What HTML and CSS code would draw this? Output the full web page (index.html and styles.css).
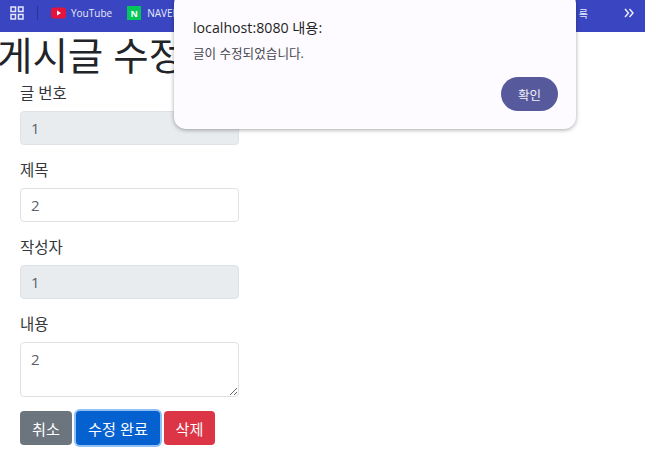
FILE: index.html
```html
<!DOCTYPE html>
<html lang="ko">
<head>
<meta charset="utf-8">
<title>게시글 수정</title>
<link rel="stylesheet" href="styles.css">
</head>
<body>
<header class="toolbar">
  <svg class="apps" width="14" height="14" viewBox="0 0 14 14"><g fill="none" stroke="#e4e6fa" stroke-width="1.5"><rect x="1" y="1" width="4.5" height="4.5"/><rect x="8.5" y="1" width="4.5" height="4.5"/><rect x="1" y="8.5" width="4.5" height="4.5"/><rect x="8.5" y="8.5" width="4.5" height="4.5"/></g></svg>
  <span class="sep"></span>
  <svg class="bm-icon" width="15" height="12" viewBox="0 0 15 12"><rect width="15" height="11" y="0.5" rx="3" fill="#e6143c"/><path d="M6 3.5v5l4-2.500z" fill="#fff"/></svg>
  <span class="bm-label">YouTube</span>
  <span class="naver">N</span>
  <span class="bm-label">NAVER</span>
  <span class="bm-end">록</span>
  <svg class="more" width="10" height="10" viewBox="0 0 10 10"><path d="M1 1l3.500 4L1 9M5.500 1L9 5l-3.500 4" fill="none" stroke="#f0f1ff" stroke-width="1.400"/></svg>
</header>
<main class="page">
  <h1 class="title">게시글 수정</h1>
  <form class="form">
    <div class="field"><label class="label">글 번호</label><input class="control" value="1" readonly></div>
    <div class="field"><label class="label">제목</label><input class="control editable" value="2"></div>
    <div class="field"><label class="label">작성자</label><input class="control" value="1" readonly></div>
    <div class="field field-last"><label class="label">내용</label><textarea class="control editable area">2</textarea></div>
    <div class="actions">
      <button type="button" class="btn grey">취소</button>
      <button type="button" class="btn blue">수정 완료</button>
      <button type="button" class="btn red">삭제</button>
    </div>
  </form>
</main>
<div class="dialog">
  <div class="dialog-title">localhost:8080 내용:</div>
  <div class="dialog-msg">글이 수정되었습니다.</div>
  <div class="dialog-actions"><button type="button" class="ok">확인</button></div>
</div>
</body>
</html>
```
FILE: styles.css
```css
* { box-sizing: border-box; }
html, body { margin: 0; padding: 0; }
body {
  width: 645px;
  height: 457px;
  overflow: hidden;
  position: relative;
  background: #fff;
  color: #212529;
  font-family: "Open Sans", "Noto Sans CJK KR", sans-serif;
}
.toolbar {
  height: 32px;
  background: #3a46c1;
  display: flex;
  align-items: center;
  padding: 0 0 6px 10px;
  color: #e8e9fb;
  font-size: 10px;
}
.sep { width: 1px; height: 14px; background: #2b3590; margin: 0 13px; }
.bm-icon { margin-right: 5px; }
.bm-label { margin-right: 15px; }
.naver {
  width: 14px;
  height: 14px;
  background: #03c75a;
  color: #fff;
  font-size: 9px;
  font-weight: 700;
  display: flex;
  align-items: center;
  justify-content: center;
  margin-right: 6px;
}
.bm-end { margin-left: auto; margin-right: 36px; }
.more { margin-right: 11px; }
.title {
  margin: 0 0 0 -3px;
  height: 48px;
  font-size: 38.500px;
  line-height: 46px;
  font-weight: 400;
  white-space: nowrap;
}
.form { width: 239px; padding-left: 20px; }
.field { margin-bottom: 12px; }
.field-last { margin-bottom: 14px; }
.label { display: block; height: 27px; margin-bottom: 4px; font-size: 15.500px; line-height: 27px; color: #33373b; }
.control {
  display: block;
  width: 219px;
  height: 34px;
  padding: 0 10px;
  border: 1px solid #dee2e6;
  border-radius: 4px;
  background: #e9ecef;
  color: #5a6168;
  font: 15px "Open Sans", "Noto Sans CJK KR", sans-serif;
  outline: none;
}
.editable { background: #fff; }
.area { height: 55px; padding-top: 6px; line-height: 20px; resize: vertical; }
.actions { display: flex; gap: 4px; }
.btn {
  height: 34px;
  border: 1px solid transparent;
  border-radius: 4px;
  color: #fff;
  font: 15.200px "Open Sans", "Noto Sans CJK KR", sans-serif;
  padding: 0;
}
.grey { width: 52px; background: #6c757d; }
.blue { width: 84px; background: #0561cf; box-shadow: 0 0 0 2px #8fc0f5; }
.red { width: 51px; background: #dc3545; }
.dialog {
  position: absolute;
  left: 174px;
  top: -8px;
  width: 402px;
  height: 137px;
  padding: 26px 18px 18px 19px;
  background: #fdfbff;
  border-radius: 12px;
  box-shadow: 0 1px 4px rgba(0, 0, 0, 0.35);
  display: flex;
  flex-direction: column;
}
.dialog-title { font-size: 14.200px; line-height: 20px; color: #1f1f24; }
.dialog-msg { margin-top: 7px; font-size: 12.600px; line-height: 18px; color: #47464f; }
.dialog-actions { margin-top: auto; display: flex; justify-content: flex-end; }
.ok {
  width: 57px;
  height: 34px;
  border: 0;
  border-radius: 17px;
  background: #565a9c;
  color: #f2f1fb;
  font: 12.500px "Open Sans", "Noto Sans CJK KR", sans-serif;
  padding: 0;
}
```
